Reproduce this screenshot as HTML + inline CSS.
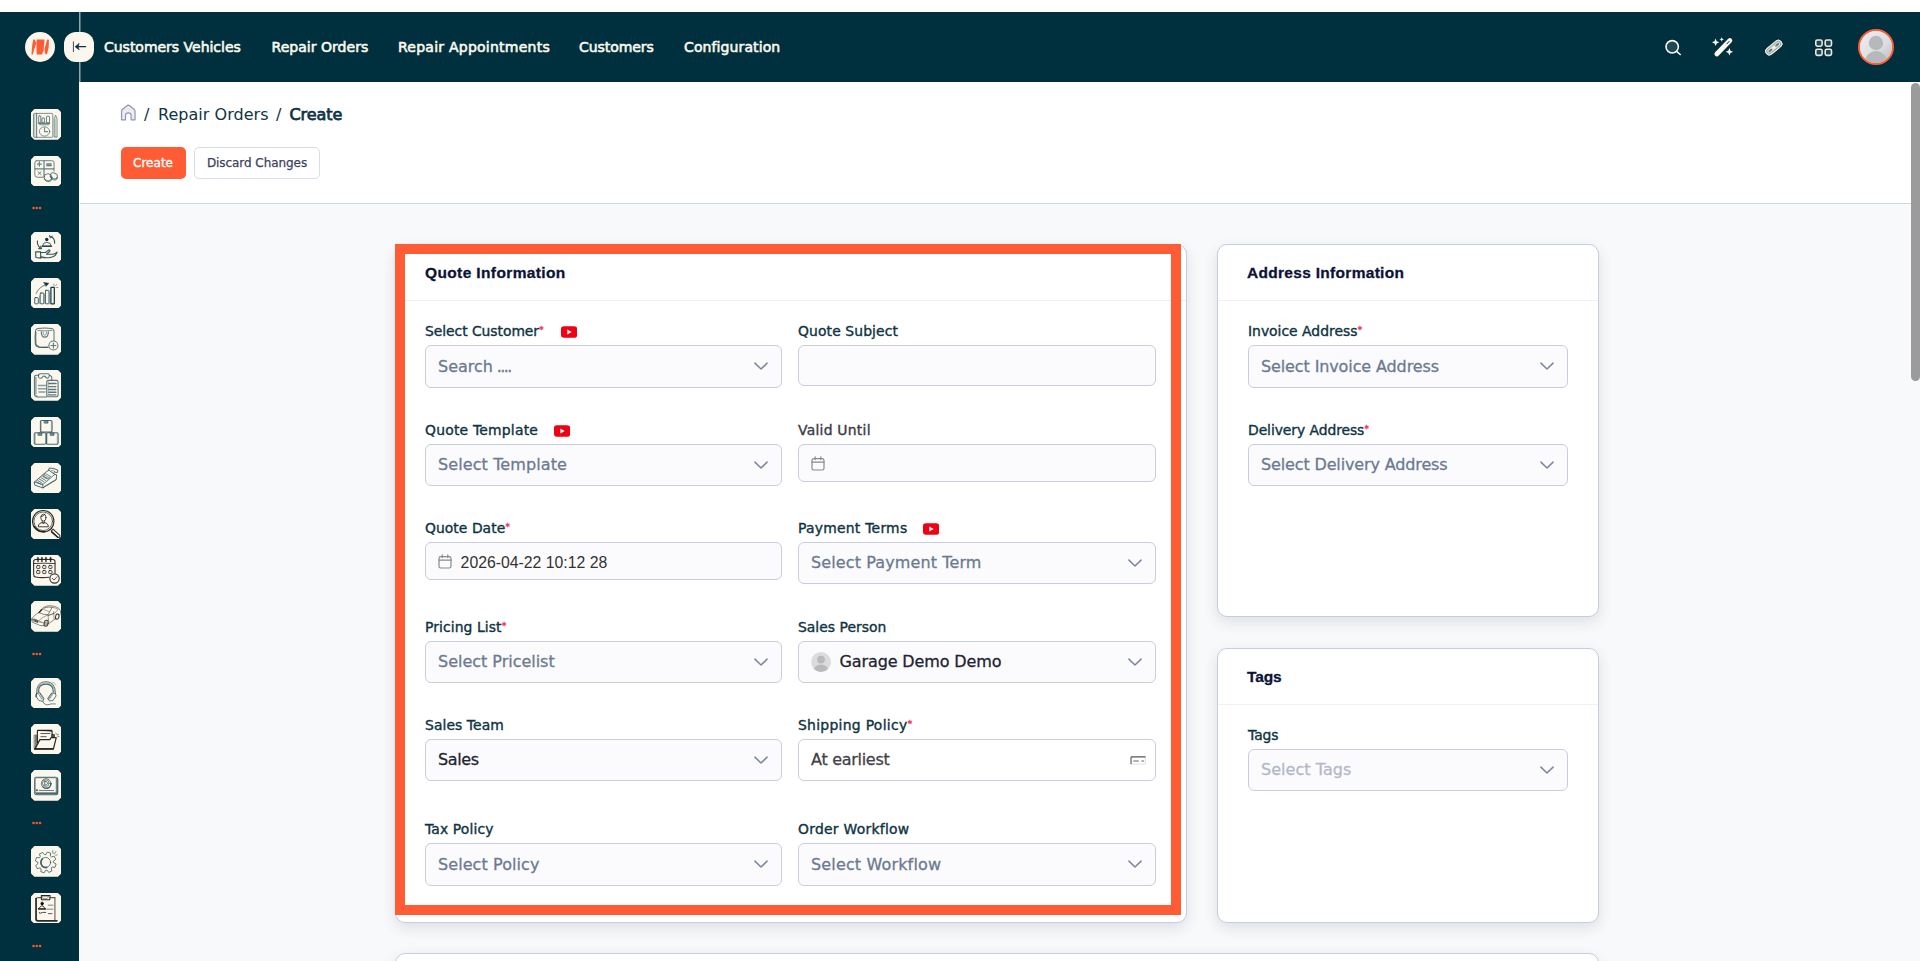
<!DOCTYPE html>
<html lang="en">
<head>
<meta charset="utf-8">
<title>Repair Orders - Create</title>
<style>
*{box-sizing:border-box;}
html,body{margin:0;padding:0;}
body{width:1920px;height:961px;overflow:hidden;background:#fff;position:relative;font-family:"DejaVu Sans","Liberation Sans",sans-serif;color:#0f3443;}
.abs{position:absolute;}
/* ---------- sidebar ---------- */
.sidebar{position:absolute;left:0;top:12px;width:79px;height:949px;background:#00303d;z-index:4;}
.vline{position:absolute;left:79px;top:12px;width:2px;height:70px;background:linear-gradient(to right,#93a6ac 0,#93a6ac 1px,#4a6b74 1px,#4a6b74 2px);z-index:4;}
.gutter{position:absolute;left:79px;top:204px;width:1px;height:757px;background:#f8f9fb;}
.logo{position:absolute;left:25px;top:20px;width:30px;height:30px;border-radius:50%;background:#fbf7ec;}
.side-ico{position:absolute;left:31.2px;width:30.3px;height:30.4px;display:block;}
.side-ico svg{position:absolute;left:0;top:0;width:30.3px;height:30.4px;}
.side-dots{position:absolute;left:32px;width:10px;height:4px;}
/* ---------- topbar ---------- */
.topbar{position:absolute;left:80px;top:12px;width:1840px;height:70px;background:#00303d;}
.collapse{position:absolute;left:64px;top:32px;width:30.4px;height:30.2px;border-radius:12px;background:#fbf7ec;z-index:5;}
.nav a{position:absolute;top:0;height:70px;line-height:70px;font-size:14px;color:#fbf7ec;white-space:nowrap;text-decoration:none;-webkit-text-stroke:0.6px #fbf7ec;}
.avatar{position:absolute;left:1778px;top:17px;width:36px;height:36px;border-radius:50%;border:2px solid #ff5c35;overflow:hidden;background:#d9d9db;}
/* ---------- page header ---------- */
.pagehead{position:absolute;left:80px;top:82px;width:1840px;height:122px;background:#fff;border-bottom:1px solid #cfd5e6;}
.crumbs{position:absolute;left:40.5px;top:20.5px;width:300px;height:24px;line-height:24px;font-size:16px;color:#0f3443;white-space:nowrap;}
.crumbs span,.crumbs b{position:absolute;top:0;}
.crumbs b{font-weight:400;-webkit-text-stroke:0.75px #0f3443;}
.crumbs .home{position:absolute;left:-0.6px;top:1.6px;width:16.6px;height:17px;}
.btn{position:absolute;top:64.5px;height:32px;line-height:32px;border-radius:5px;font-size:12px;text-align:center;white-space:nowrap;}
.btn-primary{left:40.5px;width:65px;background:#ff5c35;color:#fff;-webkit-text-stroke:0.35px #fff;}
.btn-light{left:114px;width:126px;background:#fff;border:1px solid #d9dcea;color:#3c4160;line-height:30px;-webkit-text-stroke:0.25px #3c4160;}
.scrollthumb{position:absolute;left:1911px;top:82.5px;width:9px;height:298.5px;background:#9b9b9b;border-radius:5px;z-index:9;}
/* ---------- content ---------- */
.content{position:absolute;left:80px;top:204px;width:1840px;height:757px;background:#f8f9fb;overflow:hidden;}
.card{position:absolute;background:#fff;border:1px solid #c6cce0;border-radius:10px;box-shadow:0 5px 14px rgba(40,40,60,0.12);}
.card h3{position:absolute;left:29px;top:0;margin:0;height:56px;line-height:55px;font-family:"Liberation Sans",sans-serif;font-weight:700;font-size:15.5px;color:#0c1336;-webkit-text-stroke:0.3px #0c1336;white-space:nowrap;}
.card .hr{position:absolute;left:0;right:0;top:55px;height:1px;background:#eef0f5;}
.lbl{position:absolute;height:20px;line-height:20px;font-size:13.9px;color:#0f3443;white-space:nowrap;-webkit-text-stroke:0.38px #0f3443;}
.lbl sup{color:#f1416c;font-size:8.5px;-webkit-text-stroke:0.45px #f1416c;letter-spacing:0;line-height:8px;vertical-align:top;display:inline-block;margin:5.2px 0 0 0.3px;}
.yt{position:absolute;top:4.6px;width:16.2px;height:12px;}
.fld{position:absolute;width:357px;height:42px;border:1px solid #c8cee0;border-radius:6px;background:#fbfbfd;font-size:16px;line-height:40px;padding-left:12px;color:#6b7a90;white-space:nowrap;-webkit-text-stroke:0.3px currentColor;}
.fld.dark{color:#1d2433;}
.fld.white{background:#fff;color:#424248;}
.fld.ph{color:#b3b8c9;}
.fld .chev{position:absolute;right:13.4px;top:50%;margin-top:-4.2px;width:14px;height:8.4px;}
.fld.inp{height:39px;line-height:37px;}
.fld.r{width:358px;}
.fld .cal{position:absolute;left:12.4px;top:10.9px;width:14px;height:15px;}
.fld .dt{position:absolute;left:34.6px;top:0.8px;font-family:"Liberation Sans",sans-serif;font-size:15.8px;-webkit-text-stroke:0;color:#333;}
.fld .ava{display:inline-block;vertical-align:top;width:20px;height:20px;margin:9.6px 8.6px 0 0;}
.fld .tiny{position:absolute;right:9px;top:15.5px;width:16px;height:9px;}
.fld .dots{letter-spacing:-1.55px;margin-left:-1.2px;}
.hl{position:absolute;border:10px solid #ff5c35;z-index:3;pointer-events:none;}
</style>
</head>
<body>

<!-- ======= SIDEBAR ======= -->
<aside class="sidebar">
  <div class="logo"></div>
  <svg class="abs" style="left:20px;top:15px;width:40px;height:40px" viewBox="0 0 961 961"><g fill="#ff5c35"><polygon points="275,660 295,420 320,300 352,300 392,392 335,560 310,660"/><polygon points="400,300 590,300 566,560 530,660 400,660 396,400"/><polygon points="655,300 695,308 690,480 652,650 620,662 598,620 590,520"/></g></svg>
  <a class="side-ico" title="Dashboard" style="top:97.4px"><svg viewBox="0 0 30 30"><path d="M3.7 0.9 H26.3 L29.1 3.7 V26.7 L26.3 29.5 H3.7 L0.9 26.7 V3.7 Z" fill="#fbf7ec" stroke="#fbf7ec" stroke-width="1.8" stroke-linejoin="round"/><g fill="none" stroke="#1c4450" stroke-width="0.9" stroke-linecap="round" stroke-linejoin="round" stroke-opacity="0.62">
<path d="M2.4 5.6 Q2.2 4.4 3.6 4.3 H20.6 Q21.6 4.3 21.6 5.4 V27 Q21.6 28 20.6 28 H3.6 Q2.4 28 2.4 26.8 Z"/>
<path d="M5.5 4.6 V27.8" stroke-width="1.2"/>
<path d="M3.6 5.2 V27" stroke-width="0.5"/>
<path d="M7.6 13.5 V7.4 L8.6 6.3 L9.7 7.4 V13.5 Z M10.9 13.5 V9.4 Q12.1 7.9 13.3 9.4 V13.5 Z M15.3 13.5 V8 Q15.3 6.8 16.8 6.8 Q18.3 6.8 18.3 8 V13.5 Z" stroke-width="1"/>
<path d="M7.4 14.2 H18.4 M8.4 15.6 H17.8" stroke-width="1.1" stroke-opacity="0.6"/>
<ellipse cx="13.4" cy="22.2" rx="5.1" ry="4.6"/>
<path d="M13.4 18.6 V22.4 H16.4" stroke-width="1.1"/>
<path d="M23 27.4 V9.6 L24.4 6.2 L25.8 9.6 V27.4 Z"/>
<path d="M24.4 9.8 V27.2" stroke-width="0.5"/>
</g></svg></a>
  <a class="side-ico" title="Accounting" style="top:143.6px"><svg viewBox="0 0 30 30"><path d="M3.7 0.9 H26.3 L29.1 3.7 V26.7 L26.3 29.5 H3.7 L0.9 26.7 V3.7 Z" fill="#fbf7ec" stroke="#fbf7ec" stroke-width="1.8" stroke-linejoin="round"/><g fill="none" stroke="#1c4450" stroke-width="0.95" stroke-linecap="round" stroke-linejoin="round" stroke-opacity="0.66">
<path d="M5.6 4.6 H20.6 Q22.8 4.6 22.8 6.8 V15 M12 21 H6.4 Q3.8 21 3.8 18.6 V6.8 Q3.8 4.6 5.6 4.6"/>
<path d="M12.9 5 V20.6 M4.2 12.7 H22.4" stroke-width="1.2"/>
<path d="M8.3 5.8 V10 M6.4 7.9 H10.2" stroke-width="1.2"/>
<path d="M15.6 7.9 H20 M15.6 9.4 H20" stroke-width="1.3" stroke-opacity="0.7"/>
<path d="M7 15.5 L10 18.4 M10 15.5 L7 18.4"/>
<ellipse cx="16.9" cy="21" rx="3.9" ry="3.5"/>
<path d="M13.2 22.4 Q14.4 26.2 18.6 25.2 Q20.6 24.6 20.8 22.6"/>
<ellipse cx="22.6" cy="19.6" rx="3.6" ry="2.8" transform="rotate(24 22.6 19.6)"/>
<path d="M19.2 20.4 Q20.6 24.4 24.6 23.6 Q26.4 23 26.2 21"/>
</g></svg></a>
  <a class="side-ico" title="Services" style="top:219.9px"><svg viewBox="0 0 30 30"><path d="M3.7 0.9 H26.3 L29.1 3.7 V26.7 L26.3 29.5 H3.7 L0.9 26.7 V3.7 Z" fill="#fbf7ec" stroke="#fbf7ec" stroke-width="1.8" stroke-linejoin="round"/><g fill="none" stroke="#1c4450" stroke-width="1.1" stroke-linecap="round" stroke-linejoin="round" stroke-opacity="0.9">
<circle cx="15.6" cy="7.3" r="1.7" fill="#0f3443" stroke="none"/>
<path d="M11.4 13.6 Q11.8 10.2 15.6 10.2 Q19.6 10.2 20 13.6 Z" stroke-width="0.9"/>
<path d="M11.2 14 H20.2" stroke-width="1.6"/>
<path d="M6.4 8.8 Q5.8 12.8 9 15.8 M7.6 16.4 H10.4 L9.6 14"/>
<path d="M19.4 4.6 Q23.6 5.6 23.4 11 M18.4 3.6 L19.2 5.6 L21 4"/>
<path d="M4.6 19.6 H9.4 L9.8 25.8 L4.8 25.2 Z"/>
<path d="M9.6 20.2 H14.4 L17.6 17.6 Q19 17.6 18.6 19 L15.4 22 H22 Q25 20.6 25.8 19.8 Q24.6 24.8 17.4 25.4 Q12.6 25.6 9.8 24.6"/>
</g></svg></a>
  <a class="side-ico" title="Sales" style="top:266.1px"><svg viewBox="0 0 30 30"><path d="M3.7 0.9 H26.3 L29.1 3.7 V26.7 L26.3 29.5 H3.7 L0.9 26.7 V3.7 Z" fill="#fbf7ec" stroke="#fbf7ec" stroke-width="1.8" stroke-linejoin="round"/><g fill="none" stroke="#1c4450" stroke-width="0.95" stroke-linecap="round" stroke-linejoin="round" stroke-opacity="0.85">
<rect x="3.7" y="19.4" width="3.5" height="6.1" rx="0.6"/>
<rect x="9.1" y="14.8" width="3.6" height="10.7" rx="0.8"/>
<path d="M8.4 18 V25.4" stroke-opacity="0.4" stroke-width="0.8"/>
<rect x="14.3" y="12.2" width="3.5" height="13.3" rx="0.6"/>
<path d="M13.6 16 V25.4 M18.6 14 V25.4" stroke-opacity="0.4" stroke-width="0.8"/>
<rect x="19.7" y="9.2" width="3.4" height="16.3" rx="0.4" stroke="#0f3443" stroke-width="1.2" stroke-opacity="1"/>
<path d="M5.2 15.2 Q7.6 9.6 13.4 7.2" stroke-dasharray="1.4 0.7" stroke-width="0.8"/>
<path d="M12.8 4.3 L17.6 5.2 L15 8 Z" fill="#0f3443" stroke="#0f3443" stroke-width="0.5" stroke-opacity="1"/>
<path d="M22.6 6 V8 M24.4 7.6 L25.6 6.2 M24.8 9.2 L26.8 9.4" stroke-width="0.7" stroke-opacity="0.65"/>
</g></svg></a>
  <a class="side-ico" title="Purchases" style="top:312.3px"><svg viewBox="0 0 30 30"><path d="M3.7 0.9 H26.3 L29.1 3.7 V26.7 L26.3 29.5 H3.7 L0.9 26.7 V3.7 Z" fill="#fbf7ec" stroke="#fbf7ec" stroke-width="1.8" stroke-linejoin="round"/><g fill="none" stroke="#1c4450" stroke-width="1.0" stroke-linecap="round" stroke-linejoin="round" stroke-opacity="0.72">
<path d="M6.6 4.4 Q14 3.4 20.4 4.4 Q22.8 4.8 22.8 7.6 V16 M17 23 Q10 23.6 6.6 22.6 Q4.4 22 4.2 19 Q3.8 12 4.4 7 Q4.6 4.8 6.6 4.4" />
<path d="M4.9 8 Q4.4 14 5 19.6 Q5.4 21.6 7.4 22" stroke-width="1.3" stroke-opacity="0.55"/>
<path d="M7 6.4 Q14 7.2 20.6 6.4" stroke-width="0.8"/>
<path d="M7.6 22.8 H16.6" stroke-width="1.3" stroke-opacity="0.6"/>
<path d="M10.2 7.6 Q10.2 13 13.7 13 Q17.2 13 17.2 7.6" stroke-width="1.15"/><path d="M11.9 8 Q12 11.1 13.7 11.1 Q15.4 11.1 15.5 8" stroke-width="0.7"/>
<circle cx="22.2" cy="21.2" r="4.5"/>
<path d="M22.2 18.8 V23.6 M19.8 21.2 H24.6" stroke-width="1.1"/>
</g></svg></a>
  <a class="side-ico" title="Invoicing" style="top:358.4px"><svg viewBox="0 0 30 30"><path d="M3.7 0.9 H26.3 L29.1 3.7 V26.7 L26.3 29.5 H3.7 L0.9 26.7 V3.7 Z" fill="#fbf7ec" stroke="#fbf7ec" stroke-width="1.8" stroke-linejoin="round"/><g fill="none" stroke="#1c4450" stroke-width="1.0" stroke-linecap="round" stroke-linejoin="round" stroke-opacity="0.72">
<path d="M7.6 5.2 H5 Q3.4 5.2 3.4 7 V24 Q3.6 26.6 6.4 26.6 H15.4"/>
<path d="M4.4 7 V24 Q4.8 25.8 6.6 25.8 M5.2 7 V23.4" stroke-width="0.6" stroke-opacity="0.6"/>
<path d="M7.4 6.4 Q7 3.6 9.6 3.6 H16.6 Q18.6 3.8 18 6.2 Q17.8 8.2 15.6 8 Q13.8 5.4 12 6.2 Q10.6 8.8 8.6 8 Q7.4 7.6 7.4 6.4 Z"/>
<path d="M18.4 5.4 Q20.6 5.6 20.6 8 V10"/>
<path d="M7.4 15.2 H14.6 M7.4 18.6 H14.6 M8 21.8 H13.8" stroke-width="1.5" stroke-opacity="0.5"/>
<rect x="15.6" y="10.2" width="11.2" height="16.2" rx="1.6" stroke-width="1.1"/>
<path d="M17.2 11.6 V25" stroke-width="0.5"/>
<path d="M17.8 13.4 H24.8" stroke-width="1.4"/>
<path d="M17.9 16.4 H24.9 M17.9 19.2 H24.9 M17.9 22 H24.9 M17.9 24.6 H24.9" stroke-width="1.4" stroke-dasharray="1.7 0.8"/>
</g></svg></a>
  <a class="side-ico" title="Inventory" style="top:404.7px"><svg viewBox="0 0 30 30"><path d="M3.7 0.9 H26.3 L29.1 3.7 V26.7 L26.3 29.5 H3.7 L0.9 26.7 V3.7 Z" fill="#fbf7ec" stroke="#fbf7ec" stroke-width="1.8" stroke-linejoin="round"/><g fill="none" stroke="#1c4450" stroke-width="1.0" stroke-linecap="round" stroke-linejoin="round" stroke-opacity="0.78">
<rect x="9.3" y="3.4" width="11.6" height="11.4" rx="1.2"/>
<path d="M10.2 4 V14.6 M20.2 4.4 V14.6" stroke-width="0.5" stroke-opacity="0.6"/>
<rect x="13.4" y="3.6" width="3.4" height="2.4" fill="#7d969c" stroke-width="0.8"/>
<rect x="3.2" y="15.6" width="11.6" height="11.3" rx="1.2"/>
<path d="M4.2 16.4 V26.4" stroke-width="0.6" stroke-opacity="0.6"/>
<rect x="7.3" y="15.9" width="3.4" height="2.2" fill="#7d969c" stroke-width="0.8"/>
<rect x="15.2" y="15.6" width="11.7" height="11.3" rx="1.2"/>
<path d="M16 16.4 V26.4 M26 16.4 V26.4" stroke-width="0.5" stroke-opacity="0.6"/>
<rect x="19.4" y="15.9" width="3.4" height="2.2" fill="#7d969c" stroke-width="0.8"/>
</g></svg></a>
  <a class="side-ico" title="Point of Sale" style="top:451.0px"><svg viewBox="0 0 30 30"><path d="M3.7 0.9 H26.3 L29.1 3.7 V26.7 L26.3 29.5 H3.7 L0.9 26.7 V3.7 Z" fill="#fbf7ec" stroke="#fbf7ec" stroke-width="1.8" stroke-linejoin="round"/><g fill="none" stroke="#1c4450" stroke-width="0.9" stroke-linecap="round" stroke-linejoin="round" stroke-opacity="0.85">
<path d="M3.4 18.8 L14.2 9.4 L17.6 7 L23.4 11.2 L25.4 11.6 L25 16.6 L11.8 24.6 L4.2 22 Z"/>
<path d="M3.4 18.8 L11.6 21.4 L23.4 11.4 M11.6 21.4 L11.8 24.6" stroke-width="0.8"/>
<path d="M17.4 7.2 L18 5 Q22 4.6 26.6 7 L26.2 9.4 Q24 9.6 23.2 8.2 L22.6 10.4"/>
<path d="M20 6.8 L21 8 L22.6 6.6" stroke-width="0.6"/>
<path d="M13 11.6 L17.6 14.4 M11.4 13 L16 15.8 M9.8 14.4 L14.4 17.2 M8.2 15.8 L12.8 18.6 M6.6 17.2 L11.2 20 M5.6 18.6 L9.8 21" stroke-width="0.8" stroke-dasharray="1 0.6"/>
<path d="M14.6 10.6 L19.6 13.2 L17 15.6 L12.2 12.8 Z" stroke-width="0.6" fill="#c9d2d0" fill-opacity="0.6"/>
<path d="M12.6 23.6 L24.4 16.4" stroke-width="0.6"/>
</g></svg></a>
  <a class="side-ico" title="Recruitment" style="top:497.0px"><svg viewBox="0 0 30 30"><path d="M3.7 0.9 H26.3 L29.1 3.7 V26.7 L26.3 29.5 H3.7 L0.9 26.7 V3.7 Z" fill="#fbf7ec" stroke="#fbf7ec" stroke-width="1.8" stroke-linejoin="round"/><g fill="none" stroke="#1d1d1b" stroke-width="0.9" stroke-linecap="round" stroke-linejoin="round" stroke-opacity="0.92">
<circle cx="12.1" cy="12.1" r="10.6" stroke-width="1.1"/>
<circle cx="12.1" cy="12.1" r="9.2" stroke-width="0.7"/>
<path d="M3.2 17.4 Q6.8 22.8 13.6 22.4" stroke-width="1.6"/>
<ellipse cx="12.3" cy="8.5" rx="2.6" ry="3.4" stroke-width="0.8"/>
<path d="M9.8 7.8 Q12.6 7 14 4.8" stroke-width="0.8"/>
<path d="M11.2 11.8 V13.2 M13.4 11.8 V13.2" stroke-width="0.7"/>
<path d="M7.2 17.2 Q7.4 13.4 12.2 13.4 Q17 13.4 17.2 17.2 Z" stroke-width="0.9"/>
<path d="M11.2 13.6 L12.2 14.8 L13.2 13.6" stroke-width="0.7"/>
<path d="M19.2 20.4 L20.6 19" stroke-width="0.9"/>
<path d="M20 21.8 L21.8 19.8 L28.6 26 Q29 27.6 27.6 28.2 L26.6 28 Z" stroke-width="1"/>
<path d="M20.4 22.6 L26.4 28" stroke-width="1.4"/>
</g></svg></a>
  <a class="side-ico" title="Appointments" style="top:543.3px"><svg viewBox="0 0 30 30"><path d="M3.7 0.9 H26.3 L29.1 3.7 V26.7 L26.3 29.5 H3.7 L0.9 26.7 V3.7 Z" fill="#fbf7ec" stroke="#fbf7ec" stroke-width="1.8" stroke-linejoin="round"/><g fill="none" stroke="#1d1d1b" stroke-width="1.0" stroke-linecap="round" stroke-linejoin="round" stroke-opacity="0.9">
<path d="M4.6 4.4 H21.6 Q23.8 4.4 23.8 6.6 V17.6 M17.8 22 Q10 22.8 4.6 21.8 Q2.6 21.4 2.6 19 V6.6 Q2.6 4.4 4.6 4.4" stroke-width="1.1"/>
<path d="M2.8 8.4 Q13 7.8 23.6 8.4" stroke-width="0.9"/>
<path d="M6.9 2.4 V6.4 M10.8 2.4 V6.4 M14.8 2.4 V6.4 M19.4 2.4 V6.4" stroke-width="1.4"/>
<path d="M5.8 4 H8 M9.7 4 H11.9 M13.7 4 H15.9 M18.2 4 H20.6" stroke-width="0.8"/>
<g stroke-width="0.85" fill="#d9d6cb" fill-opacity="0.55"><rect x="5.5" y="10.3" width="3.3" height="3.1" rx="0.9"/><rect x="11.5" y="10.3" width="3.3" height="3.1" rx="0.9"/><rect x="17.5" y="10.3" width="3.3" height="3.1" rx="0.9"/><rect x="5.5" y="15.3" width="3.3" height="3.1" rx="0.9"/><rect x="11.5" y="15.3" width="3.3" height="3.1" rx="0.9"/><rect x="17.5" y="15.3" width="3.3" height="3.1" rx="0.9"/></g>
<circle cx="23.3" cy="23.2" r="4.6" fill="#fbf7ec" stroke-width="1.1"/>
<path d="M21 23 L22.8 24.8 L25.8 21.4" stroke-width="0.9" stroke-opacity="0.8"/>
</g></svg></a>
  <a class="side-ico" title="Garage" style="top:589.3px"><svg viewBox="0 0 30 30"><path d="M3.7 0.9 H26.3 L29.1 3.7 V26.7 L26.3 29.5 H3.7 L0.9 26.7 V3.7 Z" fill="#fbf7ec" stroke="#fbf7ec" stroke-width="1.8" stroke-linejoin="round"/><g fill="none" stroke="#4e4e4a" stroke-width="0.7" stroke-linecap="round" stroke-linejoin="round" stroke-opacity="0.92">
<path d="M0.8 17.6 Q0.4 20 1.4 21 L8.6 24 Q11 24.6 12.6 24.4 M17.4 22.4 L24.2 17.6 M27.8 14.2 L29.4 12.6 Q29.8 9.4 27.6 7.2 Q24 4.8 19 4.6 Q14.6 4.6 12 6.6 L7.8 11.2 Q3 14 0.8 17.6"/>
<path d="M7.8 11.2 L13.6 6.8 Q17 5.4 21 6.2 L16.8 13.6 Q12.4 13.8 8.4 11.6 Z" stroke-width="0.75"/>
<path d="M8 11.4 L10.4 8.6" stroke-width="1.3" stroke="#2c2c2a"/>
<path d="M12.6 8.4 L18.2 10.6" stroke-width="0.5"/>
<path d="M16.8 13.6 L17.4 19.6 M21 6.2 Q24 6.4 26.8 8.2 L23.6 12 L17.4 14.2 M22.4 10.4 L22.8 17.6 M17 14.4 L22.6 12.2" stroke-width="0.6"/>
<path d="M16.8 13.6 Q10 16.6 7.6 19.4 M1 17.8 Q4 18 7.4 19.6 L12.6 21.6" stroke-width="0.55"/>
<path d="M3.2 17.8 L6.8 19.2 L7 21.6 L3.4 20.2 Z" fill="#3a3a38" fill-opacity="0.8" stroke-width="0.5"/>
<path d="M1.2 18 L2.6 18.6 L2.8 20 L1.4 19.4 Z M8 20.4 L10.6 21.4" stroke-width="0.5"/>
<ellipse cx="15" cy="22" rx="2" ry="3" transform="rotate(12 15 22)" stroke-width="1.1" stroke="#2c2c2a"/>
<ellipse cx="15.1" cy="22.1" rx="0.9" ry="1.6" transform="rotate(12 15 22)" stroke-width="0.6"/>
<ellipse cx="26" cy="15.4" rx="1.7" ry="2.7" transform="rotate(12 26 15.4)" stroke-width="1.1" stroke="#2c2c2a"/>
</g></svg></a>
  <a class="side-ico" title="Helpdesk" style="top:665.9px"><svg viewBox="0 0 30 30"><path d="M3.7 0.9 H26.3 L29.1 3.7 V26.7 L26.3 29.5 H3.7 L0.9 26.7 V3.7 Z" fill="#fbf7ec" stroke="#fbf7ec" stroke-width="1.8" stroke-linejoin="round"/><g fill="none" stroke="#1c4450" stroke-width="0.9" stroke-linecap="round" stroke-linejoin="round" stroke-opacity="0.78">
<path d="M5.6 15 Q5 3.6 14.8 3.6 Q24.2 3.6 24.2 15"/>
<path d="M7.6 13.6 Q7.2 6 14.8 6 Q22 6 22 13.6" stroke-width="1.2"/>
<path d="M6.6 13.8 Q6.2 4.8 14.8 4.8 Q23 4.8 23.2 13.8" stroke-width="0.5" stroke-opacity="0.6"/>
<path d="M5.8 15.2 L8.8 14.4 L12.9 20.2 L11.7 23.1 L7.9 22.3 L5.2 18.5 Z"/>
<path d="M7.4 15.8 L11 21.4 M8.6 15 L12 20.6" stroke-width="0.6" stroke-dasharray="1 0.5"/>
<path d="M5.2 18.5 Q4.6 16.6 5.8 15.2" stroke-width="1.3"/>
<path d="M20.8 14.8 L24.2 15.2 L24.8 17.7 L21.7 22.3 L18.3 22.7 L16.7 20.6 Z"/>
<path d="M21.8 15.4 L18 21.2 M20.6 15.6 L17.2 20.6" stroke-width="0.6" stroke-dasharray="1 0.5"/>
<path d="M11.8 23.2 Q13 26.8 16.6 26.4 Q19.6 25.2 24.2 25.6" stroke-width="0.8"/>
<path d="M21 4 Q23.6 4.8 24.6 7" stroke-width="0.7" stroke-opacity="0.45"/>
</g></svg></a>
  <a class="side-ico" title="Documents" style="top:712.0px"><svg viewBox="0 0 30 30"><path d="M3.7 0.9 H26.3 L29.1 3.7 V26.7 L26.3 29.5 H3.7 L0.9 26.7 V3.7 Z" fill="#fbf7ec" stroke="#fbf7ec" stroke-width="1.8" stroke-linejoin="round"/><g fill="none" stroke="#1d1d1b" stroke-width="1.0" stroke-linecap="round" stroke-linejoin="round" stroke-opacity="0.95">
<path d="M3.4 10.8 H6.3 V18.2 L4 24.6 H3.4 Z" fill="#84847e" stroke="#6c6c68" stroke-width="0.6"/>
<path d="M6.3 18.2 V7.2 Q6.3 6.3 7.2 6.3 H20 Q20.9 6.3 20.9 7.2 V13.4" stroke-width="1.1"/>
<path d="M7 6.4 Q14 6.2 20.6 7.4" stroke-width="1" stroke-opacity="0.6"/>
<path d="M9.8 9.4 H18.8 M9.8 12.5 H15" stroke-width="0.9" stroke-opacity="0.8"/>
<path d="M4 24.6 L8.8 15.4 H18.6 L20 13.5 H25 L22.2 24.6 Z" fill="#fbf7ec" stroke-width="1.2"/>
<path d="M3.6 24.7 H22" stroke-width="1.3"/>
<path d="M20.9 10.4 H23.2 V13.2 H20.9 Z" fill="#55554f" stroke-width="0.7"/>
<path d="M24.6 8.8 L25.2 10 M26 10.6 L27.2 10.2 M26.2 12 L27.8 12.4" stroke-width="0.7" stroke-opacity="0.7"/>
</g></svg></a>
  <a class="side-ico" title="eLearning" style="top:758.2px"><svg viewBox="0 0 30 30"><path d="M3.7 0.9 H26.3 L29.1 3.7 V26.7 L26.3 29.5 H3.7 L0.9 26.7 V3.7 Z" fill="#fbf7ec" stroke="#fbf7ec" stroke-width="1.8" stroke-linejoin="round"/><g fill="none" stroke="#1c4450" stroke-width="0.9" stroke-linecap="round" stroke-linejoin="round" stroke-opacity="0.75">
<path d="M5 7.2 H24.6 Q26.6 7.4 26.6 9.4 V22.4 Q26.6 24.4 24.6 24.4 H5.6 Q3.6 24.4 3.6 22.4 V9 Q3.6 7.2 5 7.2" stroke-width="1"/>
<path d="M5 7.9 Q14 7.4 24 7.8" stroke-width="0.7" stroke-opacity="0.6"/>
<path d="M24.9 8.4 V22.4" stroke-width="0.6"/>
<path d="M25.8 8.6 V22.6" stroke-width="1.4" stroke-dasharray="1 0.8" stroke-opacity="0.8"/>
<path d="M4.2 22.2 H25" stroke-width="0.7"/>
<path d="M5.4 23.4 H25.4" stroke-width="1.3" stroke-dasharray="0.9 0.9" stroke-opacity="0.85"/>
<path d="M4.4 8.6 V22" stroke-width="0.6" stroke-opacity="0.6"/>
<circle cx="15" cy="13.3" r="4.7"/>
<path d="M11.4 16.4 Q14.4 19.4 18 17.4 Q19.8 16 19.9 13.4" stroke-width="1.3" stroke-opacity="0.7"/>
<circle cx="14.7" cy="13" r="3.3" stroke-width="0.8"/>
<path d="M13.6 11 V15 M13.6 11 Q16.4 11 16.4 13 Q16.4 15 13.6 15" stroke-width="0.9"/>
<rect x="5.3" y="19.4" width="1.2" height="1.2" fill="#1c4450" stroke-width="0.5"/>
<path d="M8.2 20.2 H22.4" stroke-width="0.9"/>
</g></svg></a>
  <a class="side-ico" title="Settings" style="top:834.4px"><svg viewBox="0 0 30 30"><path d="M3.7 0.9 H26.3 L29.1 3.7 V26.7 L26.3 29.5 H3.7 L0.9 26.7 V3.7 Z" fill="#fbf7ec" stroke="#fbf7ec" stroke-width="1.8" stroke-linejoin="round"/><g fill="none" stroke="#1c4450" stroke-width="0.9" stroke-linecap="round" stroke-linejoin="round" stroke-opacity="0.72">
<path d="M22.40 16.35 L24.88 17.75 L23.78 21.10 L20.95 20.73 L20.00 21.82 L20.77 24.57 L17.63 26.15 L15.88 23.89 L14.45 24.00 L13.05 26.48 L9.70 25.38 L10.07 22.55 L8.98 21.60 L6.23 22.37 L4.65 19.23 L6.91 17.48 L6.80 16.05 L4.32 14.65 L5.42 11.30 L8.25 11.67 L9.20 10.58 L8.43 7.83 L11.57 6.25 L13.32 8.51 L14.75 8.40 L16.15 5.92 L19.50 7.02 L19.13 9.85 L20.22 10.80 L22.97 10.03 L24.55 13.17 L22.29 14.92 Z" stroke-width="0.95"/>
<circle cx="14.6" cy="16.2" r="4.9"/>
<path d="M11.2 12.6 Q8.6 16 11 19.8 Q13 21.6 15.6 21.2" stroke-width="1.7"/>
<path d="M21.4 4.6 L21.8 7.4 M23.2 7.8 L24.6 5.4 M24.4 9 L25.8 8.8" stroke-width="0.8" stroke-opacity="0.7"/>
</g></svg></a>
  <a class="side-ico" title="Employees" style="top:880.9px"><svg viewBox="0 0 30 30"><path d="M3.7 0.9 H26.3 L29.1 3.7 V26.7 L26.3 29.5 H3.7 L0.9 26.7 V3.7 Z" fill="#fbf7ec" stroke="#fbf7ec" stroke-width="1.8" stroke-linejoin="round"/><g fill="none" stroke="#1d1d1b" stroke-width="0.9" stroke-linecap="round" stroke-linejoin="round" stroke-opacity="0.95">
<path d="M23.7 4.8 V27.2" stroke-width="0.8"/>
<path d="M5 5.4 V25.6 Q5 27.4 6.8 27.5 H25.6" stroke-width="1.7"/>
<path d="M5 5.4 Q5.2 4.6 6.4 4.6 H10 M19 4.6 H23.7" stroke-width="0.9"/>
<path d="M10.2 2.4 H18.6 Q19 2.2 18.9 3 L18.6 6.4 Q18.4 6.8 17.8 6.7 H10.8 Q10.2 6.7 10.2 6 Z" stroke-width="1"/>
<path d="M11 3.2 H17.8 L15.6 5.6 H12.2 Z" stroke-width="0.6" stroke-opacity="0.7"/>
<ellipse cx="11" cy="10.4" rx="1.35" ry="1.6" fill="#111" stroke="#111" stroke-width="0.5"/>
<path d="M7.3 15.6 L10.2 12.8 H11.8 L14.3 15.6 Z" stroke-width="0.9"/>
<path d="M7.4 15.6 H14.2" stroke-width="1.2"/>
<path d="M17.2 12.1 H21.6" stroke="#a6a49a" stroke-width="1.5"/>
<path d="M15.6 16 H21.6" stroke="#a6a49a" stroke-width="1.5"/>
<path d="M8.4 19.2 L9 20.4 L10 19.2 L10.8 19.8 L11.6 19.2 H14.6" stroke-width="0.8"/>
<path d="M17.2 20.4 H20.8" stroke-width="0.9" stroke-opacity="0.8"/>
</g></svg></a>
  <svg class="side-dots" style="top:194.0px" viewBox="0 0 10 4"><circle cx="1.5" cy="2" r="1.3" fill="#f25530"/><circle cx="4.75" cy="2" r="1.3" fill="#f25530"/><circle cx="8" cy="2" r="1.3" fill="#f25530"/></svg>
  <svg class="side-dots" style="top:640.1px" viewBox="0 0 10 4"><circle cx="1.5" cy="2" r="1.3" fill="#f25530"/><circle cx="4.75" cy="2" r="1.3" fill="#f25530"/><circle cx="8" cy="2" r="1.3" fill="#f25530"/></svg>
  <svg class="side-dots" style="top:808.9px" viewBox="0 0 10 4"><circle cx="1.5" cy="2" r="1.3" fill="#f25530"/><circle cx="4.75" cy="2" r="1.3" fill="#f25530"/><circle cx="8" cy="2" r="1.3" fill="#f25530"/></svg>
  <svg class="side-dots" style="top:931.5px" viewBox="0 0 10 4"><circle cx="1.5" cy="2" r="1.3" fill="#f25530"/><circle cx="4.75" cy="2" r="1.3" fill="#f25530"/><circle cx="8" cy="2" r="1.3" fill="#f25530"/></svg>
</aside>
<div class="vline"></div><div class="gutter"></div>

<!-- ======= TOPBAR ======= -->
<header class="topbar">
  <nav class="nav">
    <a style="left:24px;letter-spacing:-0.018px">Customers Vehicles</a>
    <a style="left:191.5px;letter-spacing:0.033px">Repair Orders</a>
    <a style="left:318px;letter-spacing:0.244px">Repair Appointments</a>
    <a style="left:499px;letter-spacing:-0.054px">Customers</a>
    <a style="left:604px;letter-spacing:0.106px">Configuration</a>
  </nav>
  <svg class="abs" role="img" aria-label="Search, assistant, quick links, apps" style="left:1570px;top:13px;width:200px;height:44px" viewBox="1650 25 200 44">
    <circle cx="1672.2" cy="46.8" r="6.2" fill="#fbf7ec" fill-opacity="0.13" stroke="#fbf7ec" stroke-width="1.6"/>
    <path d="M1676.9 51.6 L1680.2 54.5" stroke="#fbf7ec" stroke-width="1.6" stroke-linecap="round" fill="none"/>
    <path d="M1716.8 54 L1729.9 40.5" stroke="#fbf7ec" stroke-width="4.7" stroke-linecap="round" fill="none"/>
    <path d="M1726.9 43.8 L1729.2 41.4" stroke="#00303d" stroke-width="1" stroke-linecap="round" fill="none"/>
    <path d="M1715.6 38.6 L1716.7 41.2 L1719.3 42.3 L1716.7 43.4 L1715.6 46 L1714.5 43.4 L1711.9 42.3 L1714.5 41.2 Z" fill="#fbf7ec"/>
    <path d="M1721.7 37.2 L1722.4 38.7 L1723.9 39.4 L1722.4 40.1 L1721.7 41.6 L1721 40.1 L1719.5 39.4 L1721 38.7 Z" fill="#fbf7ec"/>
    <path d="M1729.4 48.1 L1730.5 50.7 L1733.1 51.8 L1730.5 52.9 L1729.4 55.5 L1728.3 52.9 L1725.7 51.8 L1728.3 50.7 Z" fill="#fbf7ec"/>
    <g transform="rotate(-39.5 1773.8 47.6)">
      <rect x="1764.2" y="43.8" width="19.2" height="7.6" rx="3.8" fill="#fbf7ec" fill-opacity="0.86" stroke="#fbf7ec" stroke-width="0.9"/>
      <rect x="1765.5" y="45.1" width="16.6" height="5" rx="2.5" fill="none" stroke="#00303d" stroke-width="0.55" stroke-opacity="0.55"/>
      <ellipse cx="1769.4" cy="47.6" rx="2.3" ry="1" fill="#00303d" fill-opacity="0.55"/>
      <ellipse cx="1778.2" cy="47.6" rx="2.3" ry="1" fill="#00303d" fill-opacity="0.55"/>
      <path d="M1772.4 47.6 H1775.2" stroke="#fbf7ec" stroke-width="1.8"/>
    </g>
    <g fill="#fbf7ec" fill-opacity="0.12" stroke="#fbf7ec" stroke-opacity="0.92" stroke-width="1.6">
      <rect x="1815.8" y="40" width="6.3" height="6.2" rx="1.6"/>
      <rect x="1825.2" y="40" width="6.3" height="6.2" rx="1.6"/>
      <rect x="1815.8" y="49.2" width="6.3" height="6.2" rx="1.6"/>
      <rect x="1825.2" y="49.2" width="6.3" height="6.2" rx="1.6"/>
    </g>
  </svg>
  <div class="avatar" title="Garage Demo Demo"><svg viewBox="0 0 32 32" style="position:absolute;left:0;top:0;width:32px;height:32px"><defs><linearGradient id="avg" x1="0" y1="0" x2="1" y2="1"><stop offset="0" stop-color="#eeeff1"/><stop offset="0.6" stop-color="#dcdde0"/><stop offset="1" stop-color="#b9babd"/></linearGradient></defs><rect width="32" height="32" fill="url(#avg)"/><circle cx="16" cy="12" r="7.2" fill="#b7b8bc"/><ellipse cx="16" cy="30.5" rx="10.8" ry="10.4" fill="#b7b8bc"/></svg></div>
</header>
<div class="collapse" title="Collapse sidebar"><svg viewBox="0 0 30 30" style="position:absolute;left:0;top:0;width:30px;height:30px"><path d="M9.45 9.5 V20" stroke="#4a5a8c" stroke-width="1.1" fill="none"/><path d="M21.6 14.65 H13.6" stroke="#0f3443" stroke-width="1.25" fill="none" stroke-linecap="round"/><path d="M15.2 11.3 L11 14.65 L15.2 18 L14.2 14.65 Z" fill="#0f3443" stroke="#0f3443" stroke-width="0.5" stroke-linejoin="round"/></svg></div>

<!-- ======= PAGE HEADER ======= -->
<section class="pagehead">
  <div class="crumbs">
    <svg class="home" viewBox="0 0 16 16.4" preserveAspectRatio="none"><path d="M1.5 15.2 V7 Q1.5 6 2.3 5.4 L6.7 1.7 Q8 0.7 9.3 1.7 L13.7 5.4 Q14.5 6 14.5 7 V15.2 H10.7 V10.8 Q10.7 8.6 8 8.6 Q5.3 8.6 5.3 10.8 V15.2 Z" fill="#e4e6f0" fill-opacity="0.7" stroke="#9396b3" stroke-width="1.2" stroke-linejoin="round"/></svg>
    <span style="left:23.5px">/</span><span style="left:37.5px;letter-spacing:0.037px">Repair Orders</span><span style="left:155.5px">/</span><b style="left:169px;letter-spacing:-0.051px">Create</b>
  </div>
  <div class="btn btn-primary" style="letter-spacing:0.031px">Create</div>
  <div class="btn btn-light" style="letter-spacing:-0.062px">Discard Changes</div>
</section>
<div class="scrollthumb"></div>

<!-- ======= CONTENT ======= -->
<main class="content">
<section class="card" style="left:315px;top:40px;width:792px;height:678.5px">
<h3 style="letter-spacing:0.375px">Quote Information</h3><div class="hr"></div>
<label class="lbl" style="left:29px;top:76.3px;letter-spacing:-0.047px">Select Customer<sup>*</sup></label><span class="abs" style="left:0;top:76.3px;width:0;height:0"><svg class="yt" style="left:165.0px" viewBox="0 0 17 12"><rect x="0" y="0" width="17" height="12" rx="3" fill="#f00014"/><path d="M6.6 3.3 L11.2 6 L6.6 8.7 Z" fill="#fff"/></svg></span>
<div class="fld" style="left:29px;top:100px;height:43px;line-height:41px;letter-spacing:-0.020px">Search <span class="dots">....</span><svg class="chev" viewBox="0 0 15 9"><path d="M1 1.2 L7.5 7.6 L14 1.2" fill="none" stroke="#7a869c" stroke-width="1.6" stroke-linecap="round" stroke-linejoin="round"/></svg></div>
<label class="lbl" style="left:402px;top:76.3px;letter-spacing:0.115px">Quote Subject</label>
<div class="fld inp r" style="left:402px;top:100px;height:41px"></div>
<label class="lbl" style="left:29px;top:175px;letter-spacing:0.221px">Quote Template</label><span class="abs" style="left:0;top:175px;width:0;height:0"><svg class="yt" style="left:157.8px" viewBox="0 0 17 12"><rect x="0" y="0" width="17" height="12" rx="3" fill="#f00014"/><path d="M6.6 3.3 L11.2 6 L6.6 8.7 Z" fill="#fff"/></svg></span>
<div class="fld" style="left:29px;top:199px;letter-spacing:0.107px">Select Template<svg class="chev" viewBox="0 0 15 9"><path d="M1 1.2 L7.5 7.6 L14 1.2" fill="none" stroke="#7a869c" stroke-width="1.6" stroke-linecap="round" stroke-linejoin="round"/></svg></div>
<label class="lbl" style="left:402px;top:175px;letter-spacing:0.248px;color:#3a3c45;-webkit-text-stroke-color:#3a3c45">Valid Until</label>
<div class="fld inp r" style="left:402px;top:199px;height:38px"><svg class="cal" viewBox="0 0 14 15"><rect x="1" y="2.6" width="12" height="11.4" rx="1.8" fill="none" stroke="#8a8a8a" stroke-width="1.2"/><path d="M1 6.2 H13 M4.2 0.8 V3.6 M9.8 0.8 V3.6" fill="none" stroke="#8a8a8a" stroke-width="1.2" stroke-linecap="round"/></svg></div>
<label class="lbl" style="left:29px;top:273.3px;letter-spacing:0.040px">Quote Date<sup>*</sup></label>
<div class="fld inp" style="left:29px;top:297px;height:38px"><svg class="cal" viewBox="0 0 14 15"><rect x="1" y="2.6" width="12" height="11.4" rx="1.8" fill="none" stroke="#8a8a8a" stroke-width="1.2"/><path d="M1 6.2 H13 M4.2 0.8 V3.6 M9.8 0.8 V3.6" fill="none" stroke="#8a8a8a" stroke-width="1.2" stroke-linecap="round"/></svg><span class="dt">2026-04-22 10:12 28</span></div>
<label class="lbl" style="left:402px;top:273.3px;letter-spacing:0.250px">Payment Terms</label><span class="abs" style="left:0;top:273.3px;width:0;height:0"><svg class="yt" style="left:527.3px" viewBox="0 0 17 12"><rect x="0" y="0" width="17" height="12" rx="3" fill="#f00014"/><path d="M6.6 3.3 L11.2 6 L6.6 8.7 Z" fill="#fff"/></svg></span>
<div class="fld r" style="left:402px;top:297px;letter-spacing:0.115px">Select Payment Term<svg class="chev" viewBox="0 0 15 9"><path d="M1 1.2 L7.5 7.6 L14 1.2" fill="none" stroke="#7a869c" stroke-width="1.6" stroke-linecap="round" stroke-linejoin="round"/></svg></div>
<label class="lbl" style="left:29px;top:371.7px;letter-spacing:0.090px">Pricing List<sup>*</sup></label>
<div class="fld" style="left:29px;top:396px;letter-spacing:-0.018px">Select Pricelist<svg class="chev" viewBox="0 0 15 9"><path d="M1 1.2 L7.5 7.6 L14 1.2" fill="none" stroke="#7a869c" stroke-width="1.6" stroke-linecap="round" stroke-linejoin="round"/></svg></div>
<label class="lbl" style="left:402px;top:371.7px;letter-spacing:0.018px">Sales Person</label>
<div class="fld dark r" style="left:402px;top:396px;letter-spacing:-0.129px"><svg class="ava" viewBox="0 0 20 20"><defs><clipPath id="avc"><circle cx="10" cy="10" r="10"/></clipPath></defs><g clip-path="url(#avc)"><rect width="20" height="20" fill="#dcdcde"/><circle cx="10" cy="7.6" r="3.9" fill="#b9b9bc"/><ellipse cx="10" cy="18.2" rx="7.2" ry="5.6" fill="#b9b9bc"/></g></svg>Garage Demo Demo<svg class="chev" viewBox="0 0 15 9"><path d="M1 1.2 L7.5 7.6 L14 1.2" fill="none" stroke="#7a869c" stroke-width="1.6" stroke-linecap="round" stroke-linejoin="round"/></svg></div>
<label class="lbl" style="left:29px;top:470px;letter-spacing:0.073px">Sales Team</label>
<div class="fld dark" style="left:29px;top:494px;letter-spacing:-0.394px">Sales<svg class="chev" viewBox="0 0 15 9"><path d="M1 1.2 L7.5 7.6 L14 1.2" fill="none" stroke="#7a869c" stroke-width="1.6" stroke-linecap="round" stroke-linejoin="round"/></svg></div>
<label class="lbl" style="left:402px;top:470px;letter-spacing:0.296px">Shipping Policy<sup>*</sup></label>
<div class="fld white r" style="left:402px;top:494px;letter-spacing:-0.289px">At earliest<svg class="tiny" viewBox="0 0 16 9"><path d="M1.2 8 H15.4 V1.2" fill="none" stroke="#dcdcdc" stroke-width="0.9"/><path d="M1 8.3 V1.6 Q1 0.9 1.7 0.9 H15.6" fill="none" stroke="#555" stroke-width="1.1"/><path d="M3.8 5 H8.4 M11.8 5 H13.6" stroke="#666" stroke-width="1.1" stroke-linecap="round"/></svg></div>
<label class="lbl" style="left:29px;top:574.4px;letter-spacing:0.127px">Tax Policy</label>
<div class="fld" style="left:29px;top:598px;height:43px;line-height:41px;letter-spacing:0.079px">Select Policy<svg class="chev" viewBox="0 0 15 9"><path d="M1 1.2 L7.5 7.6 L14 1.2" fill="none" stroke="#7a869c" stroke-width="1.6" stroke-linecap="round" stroke-linejoin="round"/></svg></div>
<label class="lbl" style="left:402px;top:574.4px;letter-spacing:0.270px">Order Workflow</label>
<div class="fld r" style="left:402px;top:598px;height:43px;line-height:41px;letter-spacing:0.149px">Select Workflow<svg class="chev" viewBox="0 0 15 9"><path d="M1 1.2 L7.5 7.6 L14 1.2" fill="none" stroke="#7a869c" stroke-width="1.6" stroke-linecap="round" stroke-linejoin="round"/></svg></div>
</section>
<div class="hl" style="left:315px;top:40px;width:786px;height:670.5px"></div>
<section class="card" style="left:1137px;top:40px;width:382px;height:373px">
<h3 style="letter-spacing:0.298px">Address Information</h3><div class="hr"></div>
<label class="lbl" style="left:30px;top:76.3px">Invoice Address<sup>*</sup></label>
<div class="fld" style="left:30px;top:100px;width:320px;height:43px;line-height:41px;letter-spacing:-0.115px">Select Invoice Address<svg class="chev" viewBox="0 0 15 9"><path d="M1 1.2 L7.5 7.6 L14 1.2" fill="none" stroke="#7a869c" stroke-width="1.6" stroke-linecap="round" stroke-linejoin="round"/></svg></div>
<label class="lbl" style="left:30px;top:175px;letter-spacing:-0.069px">Delivery Address<sup>*</sup></label>
<div class="fld" style="left:30px;top:199px;width:320px;letter-spacing:-0.138px">Select Delivery Address<svg class="chev" viewBox="0 0 15 9"><path d="M1 1.2 L7.5 7.6 L14 1.2" fill="none" stroke="#7a869c" stroke-width="1.6" stroke-linecap="round" stroke-linejoin="round"/></svg></div>
</section>
<section class="card" style="left:1137px;top:444px;width:382px;height:274.5px">
<h3 style="letter-spacing:-0.100px">Tags</h3><div class="hr"></div>
<label class="lbl" style="left:30px;top:76.2px;letter-spacing:-0.051px">Tags</label>
<div class="fld ph" style="left:30px;top:100px;width:320px;letter-spacing:0.053px">Select Tags<svg class="chev" viewBox="0 0 15 9"><path d="M1 1.2 L7.5 7.6 L14 1.2" fill="none" stroke="#7a869c" stroke-width="1.6" stroke-linecap="round" stroke-linejoin="round"/></svg></div>
</section>
<section class="card" style="left:315px;top:749px;width:1204px;height:120px"></section>
</main>

</body>
</html>
